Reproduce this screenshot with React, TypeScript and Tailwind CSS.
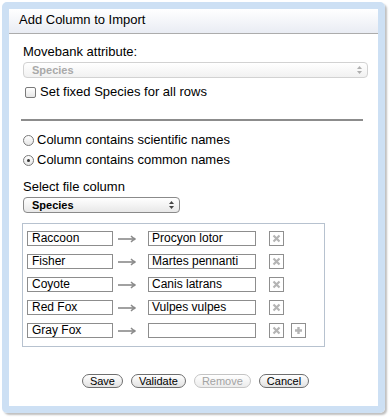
import { ReactNode } from "react"

const rows = [
    { common: "Raccoon", scientific: "Procyon lotor" },
    { common: "Fisher", scientific: "Martes pennanti" },
    { common: "Coyote", scientific: "Canis latrans" },
    { common: "Red Fox", scientific: "Vulpes vulpes" },
    { common: "Gray Fox", scientific: "" },
]

const Arrow = () => (
    <svg width="20" height="10" viewBox="0 0 20 10" className="shrink-0">
        <path d="M1 5 H18" stroke="#8a8a8a" strokeWidth="1.6" fill="none" />
        <path d="M14 2 Q16 4.5 18.5 5 Q16 5.5 14 8" stroke="#8a8a8a" strokeWidth="1.3" fill="none" />
    </svg>
)

const IconButton = ({ children }: { children: ReactNode }) => (
    <div className="flex h-[15px] w-[15px] items-center justify-center border border-[#8f8f8f] bg-white">
        {children}
    </div>
)

const RemoveIcon = () => (
    <svg width="9" height="9" viewBox="0 0 9 9">
        <path d="M1.5 1.5 L7.5 7.5 M7.5 1.5 L1.5 7.5" stroke="#b5b5b5" strokeWidth="2.2" />
    </svg>
)

const AddIcon = () => (
    <svg width="9" height="9" viewBox="0 0 9 9">
        <path d="M4.5 1 V8 M1 4.5 H8" stroke="#b5b5b5" strokeWidth="2.4" />
    </svg>
)

const SelectArrows = () => (
    <svg width="7" height="10" viewBox="0 0 7 10">
        <path d="M3.5 1 L6 4 H1 Z" fill="#444" />
        <path d="M3.5 9 L6 6 H1 Z" fill="#444" />
    </svg>
)

const PillButton = ({ label, disabled }: { label: string; disabled?: boolean }) => (
    <button
        className={
            disabled
                ? "h-[14px] rounded-full border border-[#c4c4c4] bg-gradient-to-b from-white to-[#ececec] px-[7px] text-[11px] leading-[12px] text-[#a3a3a3]"
                : "h-[14px] rounded-full border border-[#6e6e6e] bg-gradient-to-b from-white to-[#e2e2e2] px-[7px] text-[11px] leading-[12px] text-black"
        }
    >
        {label}
    </button>
)

export default function App() {
    return (
        <div className="h-[419px] w-[392px] bg-white pl-[2px] pt-[2px] font-['Liberation_Sans',Arial,sans-serif] text-[13px] text-black">
            <div className="h-[411px] w-[383px] rounded-[5px] border-[7px] border-[#cde0f4] shadow-[2px_2px_2px_rgba(0,0,0,0.25)]">
                <div className="flex h-full flex-col bg-white">
                    <header className="flex h-[25px] items-center border-b border-[#acacac] bg-gradient-to-b from-white to-[#e9ecf3] pb-[3px] pl-[10px]">
                        Add Column to Import
                    </header>

                    <div className="flex flex-1 flex-col pl-[14px] pr-[10px]">
                        <p className="mt-[10px] leading-[16px]">Movebank attribute:</p>

                        <div className="mt-[2px] flex h-[16px] w-[345px] items-center justify-between rounded-[4px] border border-[#d2d2d2] bg-gradient-to-b from-white to-[#f1f1f1] pl-[8px] pr-[4px] text-[11px] font-bold text-[#a9a9a9]">
                            <span>Species</span>
                            <span className="opacity-40">
                                <SelectArrows />
                            </span>
                        </div>

                        <label className="mt-[6px] flex items-center gap-[4px] leading-[16px]">
                            <span className="ml-[2px] h-[11px] w-[11px] rounded-[2px] border border-[#7a7a7a] bg-gradient-to-b from-white to-[#e6e6e6]" />
                            Set fixed Species for all rows
                        </label>

                        <hr className="mt-[19px] w-[342px] -ml-[2px] border-t-2 border-[#8c8c8c]" />

                        <label className="mt-[10px] flex items-center gap-[3px] leading-[18px]">
                            <span className="h-[11px] w-[11px] rounded-full border border-[#7a7a7a] bg-gradient-to-b from-white to-[#e6e6e6]" />
                            Column contains scientific names
                        </label>
                        <label className="mt-[2px] flex items-center gap-[3px] leading-[18px]">
                            <span className="flex h-[11px] w-[11px] items-center justify-center rounded-full border border-[#7a7a7a] bg-gradient-to-b from-white to-[#e6e6e6]">
                                <span className="h-[3px] w-[3px] rounded-full bg-[#333]" />
                            </span>
                            Column contains common names
                        </label>

                        <p className="mt-[10px] leading-[16px]">Select file column</p>
                        <div className="mt-[2px] flex h-[16px] w-[157px] items-center justify-between rounded-[4px] border border-[#8a8a8a] bg-gradient-to-b from-white to-[#e8e8e8] pl-[8px] pr-[4px] text-[11px] font-bold text-black">
                            <span>Species</span>
                            <SelectArrows />
                        </div>

                        <div className="mt-[10px] -ml-[1px] flex h-[124px] w-[303px] flex-col gap-[8px] border border-[#b7c2cf] px-[4px] pt-[7px]">
                            {rows.map((row, i) => (
                                <div key={row.common} className="flex items-center">
                                    <div className="h-[15px] w-[86px] border border-[#8d8d8d] pl-[4px] text-[12px] leading-[13px]">
                                        {row.common}
                                    </div>
                                    <div className="ml-[4px] mr-[11px]">
                                        <Arrow />
                                    </div>
                                    <div className="h-[15px] w-[108px] border border-[#8d8d8d] pl-[3px] text-[12px] leading-[13px]">
                                        {row.scientific}
                                    </div>
                                    <div className="ml-[13px] flex gap-[7px]">
                                        <IconButton>
                                            <RemoveIcon />
                                        </IconButton>
                                        {i === rows.length - 1 && (
                                            <IconButton>
                                                <AddIcon />
                                            </IconButton>
                                        )}
                                    </div>
                                </div>
                            ))}
                        </div>

                        <div className="mt-[27px] flex justify-center gap-[8px]">
                            <PillButton label="Save" />
                            <PillButton label="Validate" />
                            <PillButton label="Remove" disabled />
                            <PillButton label="Cancel" />
                        </div>
                    </div>
                </div>
            </div>
        </div>
    )
}
